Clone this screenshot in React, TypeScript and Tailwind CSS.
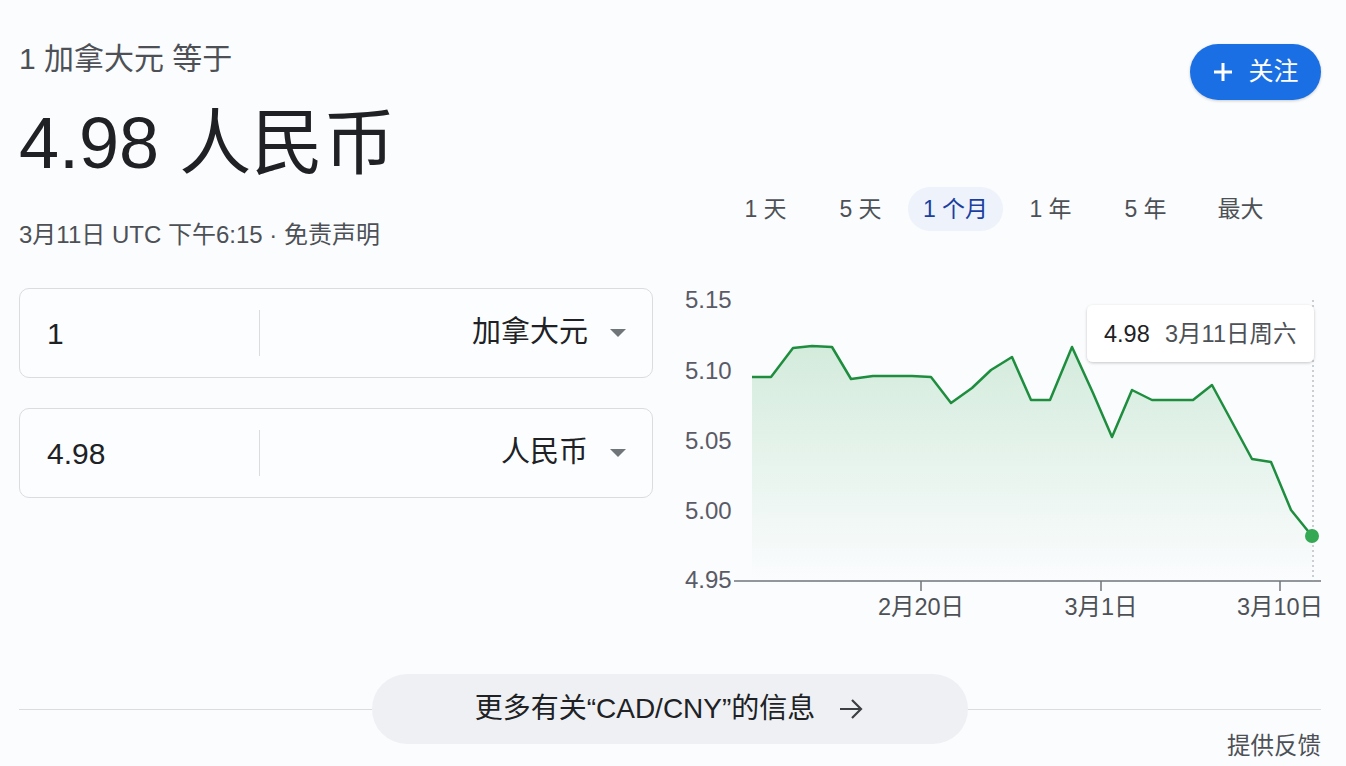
import React from 'react';

const POINTS: [number, number][] = [
  [752, 377], [771, 377], [793, 348], [812, 346], [832, 347], [851, 379], [873, 376],
  [912, 376], [931, 377], [951, 403], [972, 388], [991, 370], [1012, 357], [1031, 400],
  [1050, 400], [1072, 347], [1093, 393], [1112, 437], [1132, 390], [1152, 400], [1193, 400],
  [1212, 385], [1252, 459], [1271, 462], [1291, 510], [1312, 536],
];

const Y_LABELS = [
  { label: '5.15', y: 300 },
  { label: '5.10', y: 371 },
  { label: '5.05', y: 441 },
  { label: '5.00', y: 511 },
  { label: '4.95', y: 580 },
];

const X_LABELS = [
  { label: '2月20日', x: 921 },
  { label: '3月1日', x: 1101 },
  { label: '3月10日', x: 1280 },
];

const TABS = ['1 天', '5 天', '1 个月', '1 年', '5 年', '最大'];

const Chart: React.FC = () => {
  const line = POINTS.map(([x, y]) => `${x},${y}`).join(' ');
  const area = `752,581 ${line} 1312,581`;
  return (
    <svg width={668} height={350} viewBox="653 280 668 350" className="block overflow-visible">
      <defs>
        <linearGradient id="fill" x1="0" y1="0" x2="0" y2="1">
          <stop offset="0%" stopColor="#34a853" stopOpacity="0.2" />
          <stop offset="100%" stopColor="#34a853" stopOpacity="0" />
        </linearGradient>
        <filter id="shadow" x="-10%" y="-20%" width="120%" height="150%">
          <feDropShadow dx="0" dy="1" stdDeviation="1.5" floodColor="#000" floodOpacity="0.22" />
        </filter>
      </defs>
      {Y_LABELS.map((l) => (
        <text key={l.label} x={685} y={l.y + 8} fontSize={24} fill="#5a5b66">
          {l.label}
        </text>
      ))}
      <polygon points={area} fill="url(#fill)" />
      <line x1={734} y1={581} x2={1321} y2={581} stroke="#70757a" strokeWidth={1.5} />
      {X_LABELS.map((l) => (
        <g key={l.label}>
          <line x1={l.x} y1={581} x2={l.x} y2={591} stroke="#70757a" strokeWidth={1.5} />
          <text x={l.x} y={615} fontSize={23.5} fill="#4d5156" textAnchor="middle">
            {l.label}
          </text>
        </g>
      ))}
      <line x1={1313} y1={300} x2={1313} y2={581} stroke="#9aa0a6" strokeWidth={1} strokeDasharray="2 3" />
      <polyline points={line} fill="none" stroke="#1e8e3e" strokeWidth={2.5} strokeLinejoin="round" />
      <circle cx={1312} cy={536} r={7} fill="#34a853" />
      <rect x={1087} y={305} width={227} height={57} rx={6} fill="#ffffff" filter="url(#shadow)" />
      <text x={1104} y={342} fontSize={23.5} fill="#202124">4.98</text>
      <text x={1165} y={342} fontSize={23.5} fill="#4d5156">3月11日周六</text>
    </svg>
  );
};

const CurrencyBox: React.FC<{ value: string; currency: string }> = ({ value, currency }) => (
  <div className="flex h-[90px] items-center rounded-[10px] border border-[#dadce0] bg-[#fcfdff]">
    <div className="flex h-[46px] w-[240px] items-center border-r border-[#dadce0] pl-[27px] text-[30px] text-[#202124]">
      {value}
    </div>
    <div className="flex flex-1 items-center justify-end gap-[22px] pr-[26px]">
      <span className="text-[29px] text-[#202124]">{currency}</span>
      <span className="h-0 w-0 border-x-[8px] border-t-[8px] border-x-transparent border-t-[#70757a]" />
    </div>
  </div>
);

const App: React.FC = () => {
  return (
    <div className="h-[766px] w-[1346px] overflow-hidden bg-[#fbfcfe] pl-[19px] pr-[25px] font-['Liberation_Sans','Noto_Sans_CJK_SC',sans-serif]">
      <div className="flex">
        {/* Left column */}
        <div className="w-[634px] pt-[39px]">
          <div className="text-[30px] leading-[40px] text-[#4d5156]">1 加拿大元 等于</div>
          <div className="mt-[23px] text-[72px] leading-[82px] text-[#202124]">4.98 人民币</div>
          <div className="mt-[35px] text-[24px] leading-[32px] text-[#4d5156]">
            3月11日 UTC 下午6:15 · 免责声明
          </div>
          <div className="mt-[37px] flex flex-col gap-[30px]">
            <CurrencyBox value="1" currency="加拿大元" />
            <CurrencyBox value="4.98" currency="人民币" />
          </div>
        </div>

        {/* Right column */}
        <div className="flex flex-1 flex-col pt-[44px]">
          <div className="flex justify-end">
            <button className="flex h-[56px] w-[131px] items-center justify-center gap-[14px] rounded-full bg-[#1b6fe4] text-[25px] text-white shadow-[0_1px_3px_rgba(0,0,0,0.2)]">
              <svg width="22" height="22" viewBox="0 0 22 22">
                <path d="M11 2v18M2 11h18" stroke="#fff" strokeWidth="3" />
              </svg>
              <span>关注</span>
            </button>
          </div>
          <div className="ml-[65px] mt-[87px] flex">
            {TABS.map((t) => (
              <div
                key={t}
                className={
                  t === '1 个月'
                    ? 'flex h-[44px] w-[95px] items-center justify-center rounded-full bg-[#eef2fa] text-[23px] text-[#1a3fa0]'
                    : 'flex h-[44px] w-[95px] items-center justify-center text-[23px] text-[#4d5156]'
                }
              >
                {t}
              </div>
            ))}
          </div>
          <div className="mt-[49px]">
            <Chart />
          </div>
        </div>
      </div>

      {/* Bottom */}
      <div className="mt-[44px] flex items-center">
        <div className="h-px flex-1 bg-[#dadce0]" />
        <button className="flex h-[70px] w-[596px] items-center justify-center gap-[22px] rounded-full bg-[#eef0f3] text-[28px] text-[#202124]">
          <span>更多有关“CAD/CNY”的信息</span>
          <svg width="28" height="28" viewBox="0 0 28 28">
            <path d="M3 14h21M15 5l9 9-9 9" fill="none" stroke="#3c4043" strokeWidth="2.2" />
          </svg>
        </button>
        <div className="h-px flex-1 bg-[#dadce0]" />
      </div>
      <div className="-mt-[13px] flex justify-end text-[23.5px] leading-[30px] text-[#4d5156]">提供反馈</div>
    </div>
  );
};

export default App;
